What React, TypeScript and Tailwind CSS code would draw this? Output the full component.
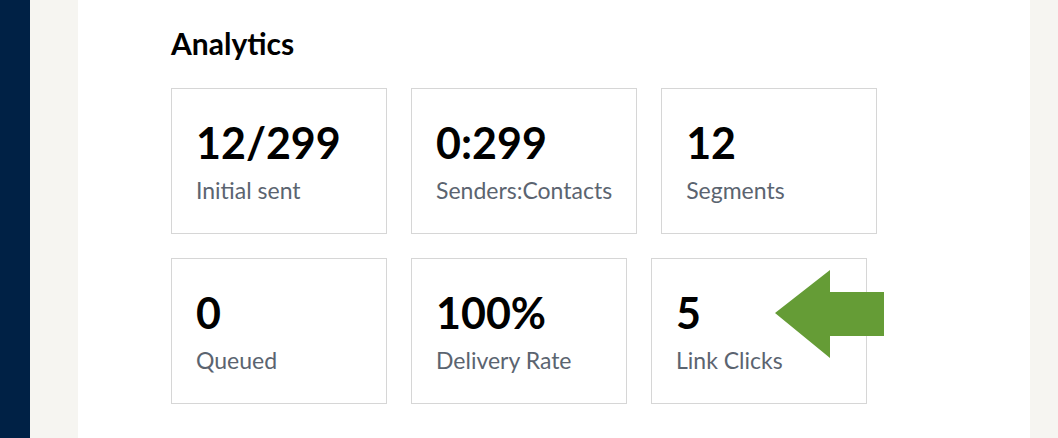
export default function App() {
  const rows = [
    [
      { value: "12/299", label: "Initial sent" },
      { value: "0:299", label: "Senders:Contacts" },
      { value: "12", label: "Segments" },
    ],
    [
      { value: "0", label: "Queued" },
      { value: "100%", label: "Delivery Rate" },
      { value: "5", label: "Link Clicks" },
    ],
  ];

  return (
    <div className="flex h-[438px] w-full overflow-hidden bg-[#f6f5f1] font-['Lato',sans-serif]">
      {/* navy side rail */}
      <div className="w-[30px] shrink-0 bg-[#002145]" />

      <div className="relative ml-[48px] mr-[28px] flex-1 bg-white pl-[93px] pt-[28px]">
        <h2 className="text-[30px] leading-none font-bold text-black">Analytics</h2>

        <div className="mt-[30px] flex flex-col gap-[24px]">
          {rows.map((row, i) => (
            <div key={i} className="flex gap-[24px]">
              {row.map((card) => (
                <div
                  key={card.label}
                  className="min-w-[216px] border border-[#d6d6d6] px-[24px] pt-[32px] pb-[31px]"
                >
                  <div className="text-[43px] leading-none font-bold text-black">{card.value}</div>
                  <div className="mt-[15px] text-[23px] leading-none text-[#5b6470]">{card.label}</div>
                </div>
              ))}
            </div>
          ))}
        </div>

        {/* green pointer arrow */}
        <svg
          className="absolute left-[697px] top-[270px]"
          width="110"
          height="88"
          viewBox="0 0 110 88"
        >
          <polygon points="0,43 55,0 55,22 109,22 109,66 55,66 55,88" fill="#659c36" />
        </svg>
      </div>
    </div>
  );
}
